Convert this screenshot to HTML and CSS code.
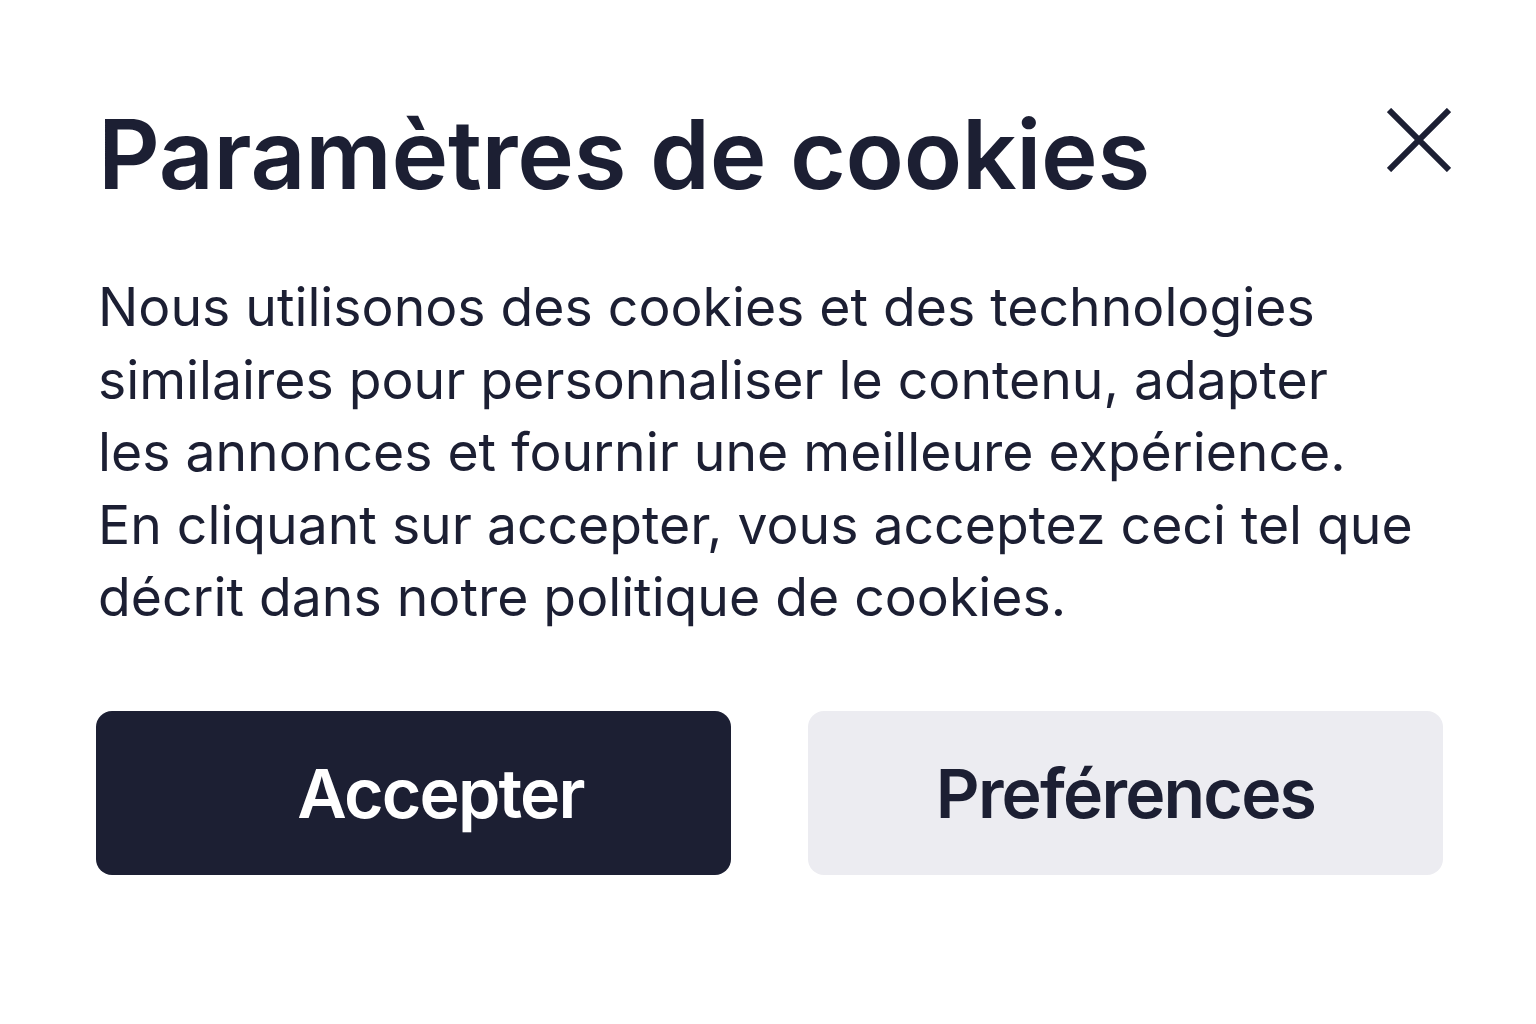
FILE: index.html
```html
<!DOCTYPE html>
<html lang="fr">
<head>
<meta charset="utf-8">
<link rel="stylesheet" href="styles.css">
</head>
<body>
<div class="dialog">
  <div class="header">
    <h1 class="title">Paramètres de cookies</h1>
    <button class="close" aria-label="Fermer">
      <svg width="64" height="64" viewBox="0 0 64 64"><path d="M2 2 L62 62 M62 2 L2 62" stroke="#1c1f33" stroke-width="6" fill="none"/></svg>
    </button>
  </div>
  <p class="text">Nous utilisonos des cookies et des technologies<br>similaires pour personnaliser le contenu, adapter<br>les annonces et fournir une meilleure expérience.<br>En cliquant sur accepter, vous acceptez ceci tel que<br>décrit dans notre politique de cookies.</p>
  <div class="actions">
    <button class="btn btn-primary">Accepter</button>
    <button class="btn btn-secondary">Preférences</button>
  </div>
</div>
</body>
</html>
```
FILE: styles.css
```css
html, body {
  margin: 0;
  padding: 0;
  background: #ffffff;
}
body {
  font-family: Inter, "Noto Sans", sans-serif;
  color: #1c1f33;
}
.dialog {
  padding: 96px 85px 0 96px;
}
.header {
  display: flex;
  justify-content: space-between;
  align-items: flex-start;
}
.title {
  margin: 0;
  font-size: 96px;
  font-weight: 600;
  line-height: 116px;
  letter-spacing: -0.3px;
  padding-left: 2px;
}
.close {
  border: none;
  background: none;
  padding: 0;
  margin-top: 12px;
  width: 64px;
  height: 64px;
  cursor: pointer;
}
.close svg { display: block; }
.text {
  margin: 59px 0 0 2px;
  font-size: 53.5px;
  line-height: 72.5px;
  font-weight: 400;
}
.actions {
  display: flex;
  gap: 77px;
  margin-top: 77px;
}
.btn {
  width: 635px;
  height: 164px;
  border: none;
  border-radius: 16px;
  font-family: Inter, "Noto Sans", sans-serif;
  font-size: 68px;
  font-weight: 600;
  letter-spacing: -1.8px;
  cursor: pointer;
}
.btn-primary {
  background: #1c1f33;
  color: #ffffff;
  padding-left: 60px;
}
.btn-secondary {
  background: #ececf1;
  color: #1c1f33;
}
```
